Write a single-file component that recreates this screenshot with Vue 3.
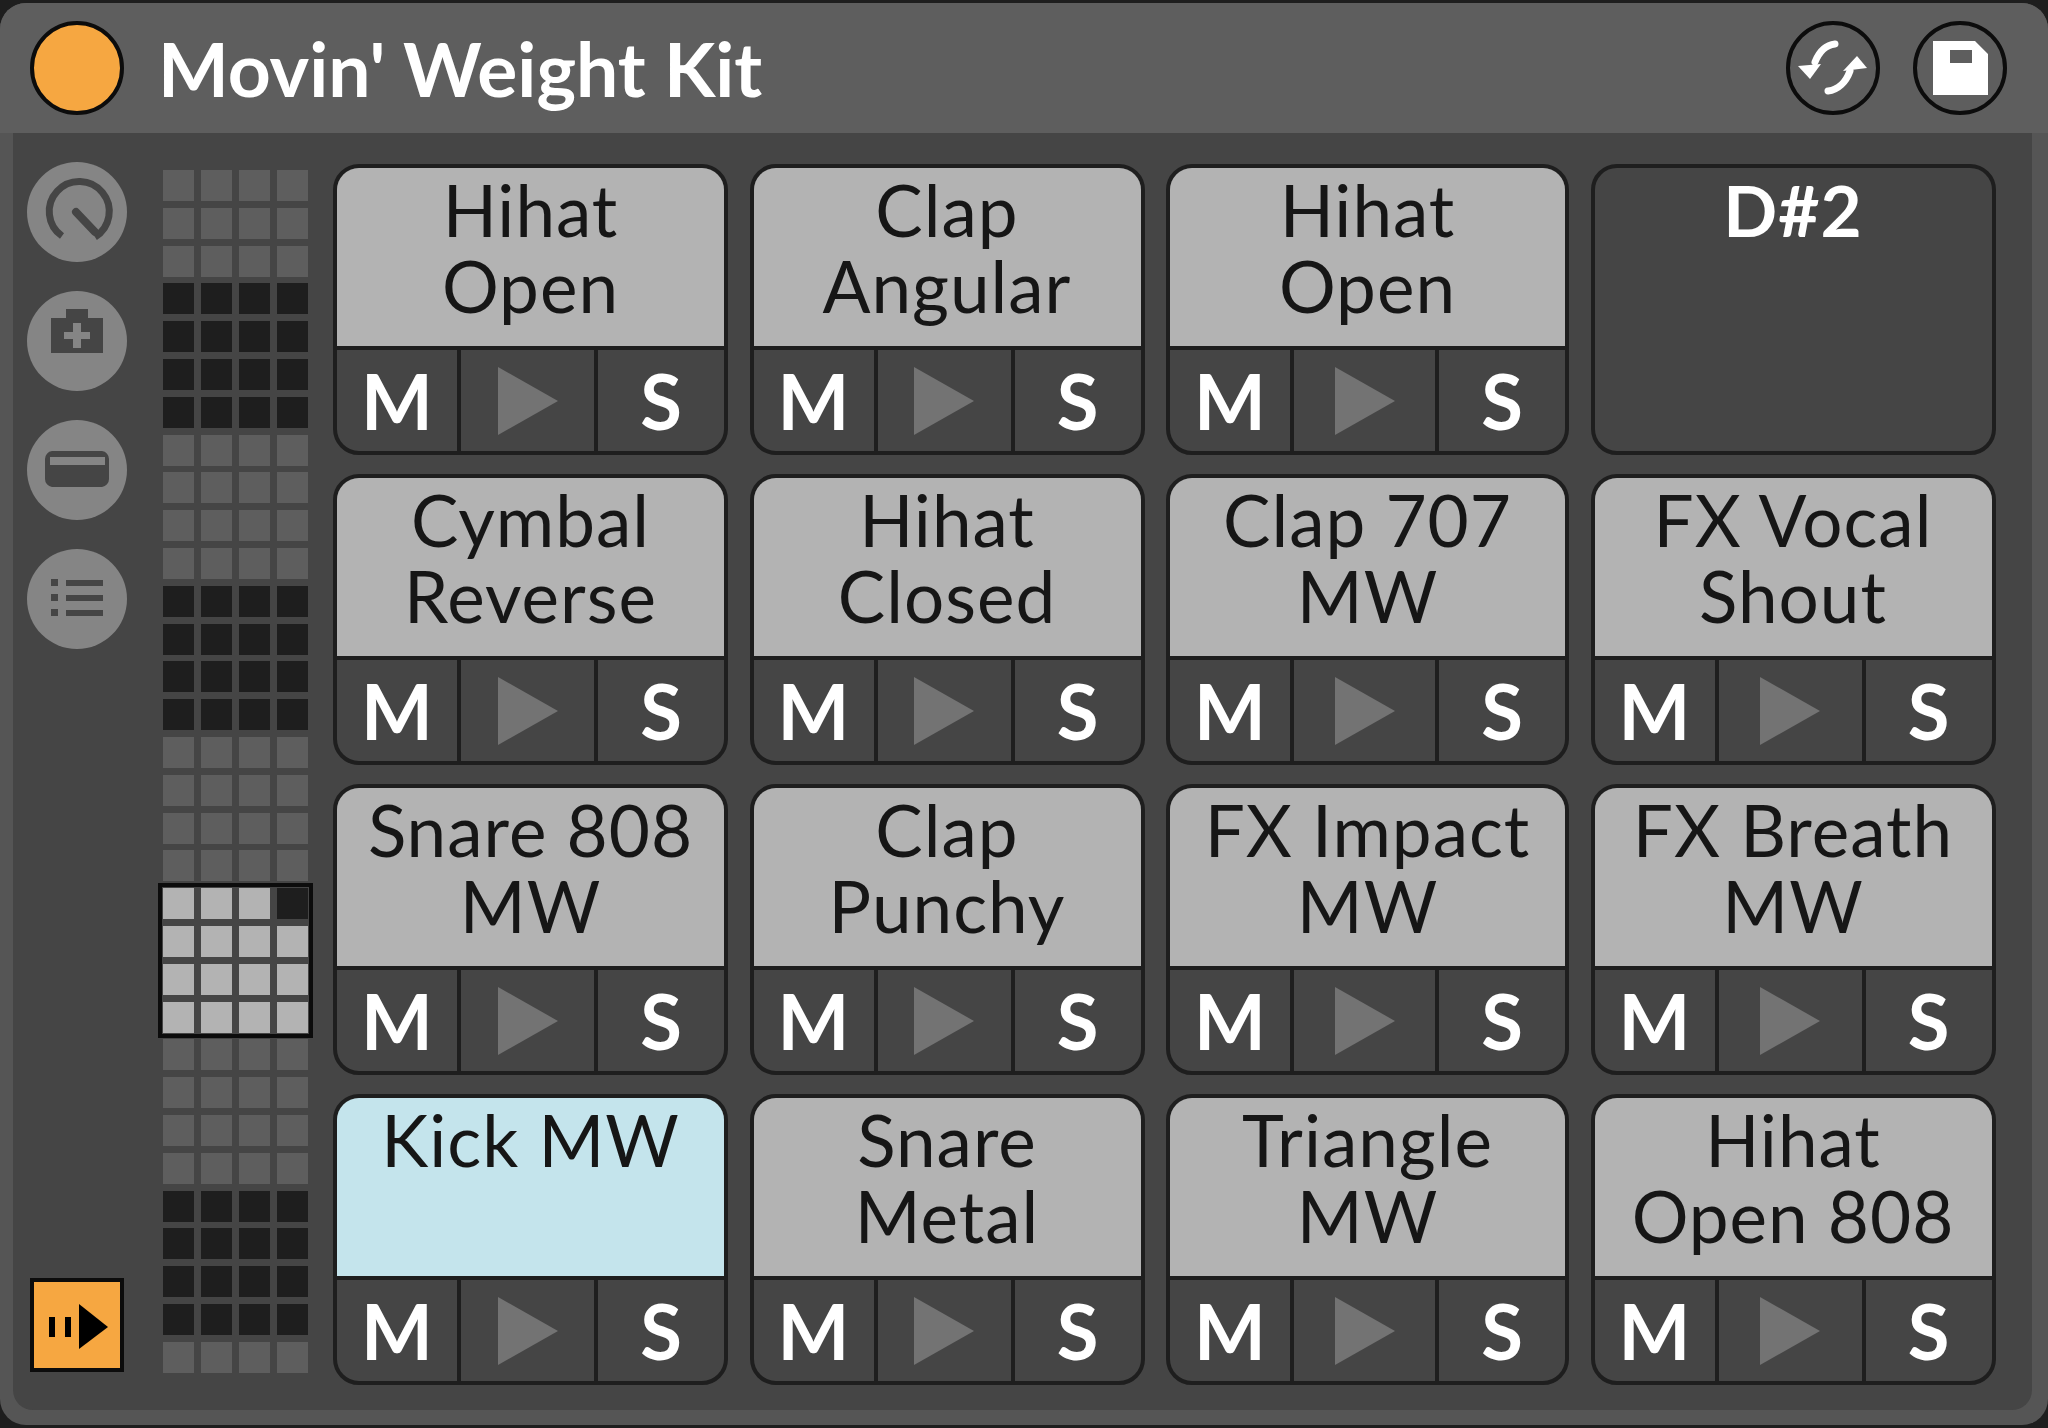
<script setup>
const sideButtons = ["follow", "capture", "slot", "list"];

// mini map of the 128 notes, shown 4 to a row and 8 to a group of the pad rows
const rowTones = [
  ...Array(3).fill("grey"),
  ...Array(4).fill("dark"),
  ...Array(4).fill("grey"),
  ...Array(4).fill("dark"),
  ...Array(4).fill("grey"),
  ...Array(4).fill("lit"),
  ...Array(4).fill("grey"),
  ...Array(4).fill("dark"),
  "grey",
];

const cells = rowTones.flatMap((tone, row) =>
  [0, 1, 2, 3].map((col) => ({
    id: `${row}-${col}`,
    tone: row === 19 && col === 3 ? "dark" : tone,
  })),
);

const pads = [
  { label: "Hihat\nOpen" },
  { label: "Clap\nAngular" },
  { label: "Hihat\nOpen" },
  { label: "D#2", empty: true },
  { label: "Cymbal\nReverse" },
  { label: "Hihat\nClosed" },
  { label: "Clap 707\nMW" },
  { label: "FX Vocal\nShout" },
  { label: "Snare 808\nMW" },
  { label: "Clap\nPunchy" },
  { label: "FX Impact\nMW" },
  { label: "FX Breath\nMW" },
  { label: "Kick MW", selected: true },
  { label: "Snare\nMetal" },
  { label: "Triangle\nMW" },
  { label: "Hihat\nOpen 808" },
];
</script>

<template>
  <div class="page">
    <div class="device">
      <header class="titlebar">
        <span class="activator"></span>
        <h1 class="title">Movin' Weight Kit</h1>
        <button class="round">
          <svg viewBox="0 0 86 86" width="86" height="86">
            <path d="M45 19 C36 20 29 27 25 37" fill="none" stroke="#fff" stroke-width="7" stroke-linecap="round" />
            <path d="M8 41 L20 54 L31 39 Z" fill="#fff" />
            <path d="M38 66 C48 65 56 57 60 46" fill="none" stroke="#fff" stroke-width="7" stroke-linecap="round" />
            <path d="M77 43 L67 31 L53 46 Z" fill="#fff" />
          </svg>
        </button>
        <button class="round">
          <svg viewBox="0 0 86 86" width="86" height="86">
            <path fill-rule="evenodd" d="M16 16 H58 L71 29 V70 H16 Z M33 25 V38 H55 V25 Z" fill="#fff" />
          </svg>
        </button>
      </header>

      <main class="panel">
        <aside class="side">
          <button v-for="name in sideButtons" :key="name" class="side-btn">
            <svg viewBox="0 0 100 100" width="100" height="100">
              <g v-if="name === 'follow'" fill="none" stroke="#454545" stroke-width="7">
                <path d="M35 74 A30 30 0 1 1 68 75" />
                <path d="M49 50 L68 70" stroke-linecap="round" stroke-width="8" />
              </g>
              <g v-else-if="name === 'capture'">
                <path fill-rule="evenodd" fill="#454545" d="M24 27 H39 V18 H61 V27 H76 V62 H24 Z M46 32 V41 H37 V48 H46 V57 H54 V48 H63 V41 H54 V32 Z" />
              </g>
              <g v-else-if="name === 'slot'">
                <path fill-rule="evenodd" fill="#454545" d="M25 32 H75 A8 8 0 0 1 82 40 V60 A8 8 0 0 1 75 68 H25 A8 8 0 0 1 18 60 V40 A8 8 0 0 1 25 32 Z M23 38 V46 H78 V38 Z" transform="translate(0 -1)" />
              </g>
              <g v-else fill="#454545">
                <rect x="24" y="30" width="7" height="7" />
                <rect x="39" y="31" width="37" height="6" />
                <rect x="24" y="45" width="7" height="7" />
                <rect x="39" y="46" width="37" height="6" />
                <rect x="24" y="60" width="7" height="7" />
                <rect x="39" y="61" width="37" height="6" />
              </g>
            </svg>
          </button>
          <button class="arm">
            <svg viewBox="0 0 86 86" width="86" height="86">
              <rect x="15" y="35" width="6" height="20" fill="#000" />
              <rect x="31" y="35" width="6" height="20" fill="#000" />
              <path d="M45 22 L74 45 L45 67 Z" fill="#000" />
            </svg>
          </button>
        </aside>

        <div class="map">
          <span v-for="cell in cells" :key="cell.id" class="cell" :class="cell.tone"></span>
          <span class="view"></span>
        </div>

        <div class="pads">
          <section v-for="(pad, i) in pads" :key="i" class="pad" :class="{ empty: pad.empty }">
            <div class="name" :class="{ selected: pad.selected }">{{ pad.label }}</div>
            <div v-if="!pad.empty" class="controls">
              <span class="ctl">M</span>
              <span class="ctl play"><i class="tri"></i></span>
              <span class="ctl">S</span>
            </div>
          </section>
        </div>
      </main>
    </div>
  </div>
</template>

<style>
html,
body {
  margin: 0;
  background: #1e1e1e;
}
</style>

<style scoped>
.page {
  width: 2048px;
  height: 1428px;
  padding-top: 3px;
  box-sizing: border-box;
  background: #1e1e1e;
  overflow: hidden;
  font-family: Lato, "Open Sans", sans-serif;
  filter: blur(0.6px);
}
.device {
  height: 1422px;
  border-radius: 26px;
  background: #555;
  display: flex;
  flex-direction: column;
}
.titlebar {
  height: 130px;
  flex: none;
  display: flex;
  align-items: center;
  padding: 0 41px 0 30px;
  box-sizing: border-box;
  border-radius: 26px 26px 0 0;
  background: #5e5e5e;
}
.activator {
  width: 94px;
  height: 94px;
  box-sizing: border-box;
  border: 4px solid #0c0c0c;
  border-radius: 50%;
  background: #f6a741;
}
.title {
  margin: 0 auto 0 34px;
  font-size: 75px;
  font-weight: 700;
  color: #fff;
}
.round {
  width: 94px;
  height: 94px;
  padding: 0;
  margin-left: 33px;
  box-sizing: border-box;
  border: 4px solid #0c0c0c;
  border-radius: 50%;
  background: none;
  display: flex;
}
.panel {
  margin: 0 16px 0 13px;
  height: 1277px;
  box-sizing: border-box;
  padding: 29px 0 38px 14px;
  background: #454545;
  border-radius: 0 0 20px 20px;
  display: flex;
}
.side {
  width: 100px;
  display: flex;
  flex-direction: column;
  align-items: center;
  gap: 29px;
}
.side-btn {
  width: 100px;
  height: 100px;
  padding: 0;
  border: 0;
  border-radius: 50%;
  background: #858585;
  display: flex;
}
.arm {
  width: 94px;
  height: 94px;
  margin-top: auto;
  padding: 0;
  box-sizing: border-box;
  border: 4px solid #0c0c0c;
  background: #f6a741;
  display: flex;
}
.map {
  position: relative;
  margin: 8px 0 0 36px;
  width: 145px;
  height: 1203px;
  flex: none;
  display: grid;
  grid-template-columns: repeat(4, 31px);
  grid-auto-rows: 31px;
  column-gap: 7px;
  row-gap: 6.8px;
}
.cell.grey {
  background: #5e5e5e;
}
.cell.dark {
  background: #1e1e1e;
}
.cell.lit {
  background: #b3b3b3;
}
.view {
  position: absolute;
  left: -5px;
  top: 713px;
  width: 155px;
  height: 155px;
  box-sizing: border-box;
  border: 4px solid #0c0c0c;
}
.pads {
  margin: 2px 0 0 25px;
  display: grid;
  grid-template-columns: 395px 395px 403px 405px;
  grid-auto-rows: 291px;
  column-gap: 21.5px;
  row-gap: 19px;
}
.pad {
  box-sizing: border-box;
  border: 4px solid #1e1e1e;
  border-radius: 26px;
  overflow: hidden;
  display: flex;
  flex-direction: column;
}
.name {
  height: 178px;
  flex: none;
  box-sizing: border-box;
  padding-top: 4px;
  background: #b3b3b3;
  color: #161616;
  font-size: 71px;
  line-height: 76px;
  letter-spacing: 1px;
  text-align: center;
  white-space: pre-line;
}
.name.selected {
  background: #c4e4ec;
}
.pad.empty .name {
  background: none;
  color: #fff;
  font-weight: 700;
}
.controls {
  flex: 1;
  display: grid;
  grid-template-columns: 120px 1fr 126px;
  border-top: 4px solid #1e1e1e;
}
.ctl {
  display: flex;
  align-items: center;
  justify-content: center;
  color: #fff;
  font-size: 76px;
  font-weight: 700;
}
.play {
  border-left: 4px solid #1e1e1e;
  border-right: 4px solid #1e1e1e;
}
.tri {
  width: 0;
  height: 0;
  border-left: 60px solid #737373;
  border-top: 34px solid transparent;
  border-bottom: 34px solid transparent;
}
</style>
